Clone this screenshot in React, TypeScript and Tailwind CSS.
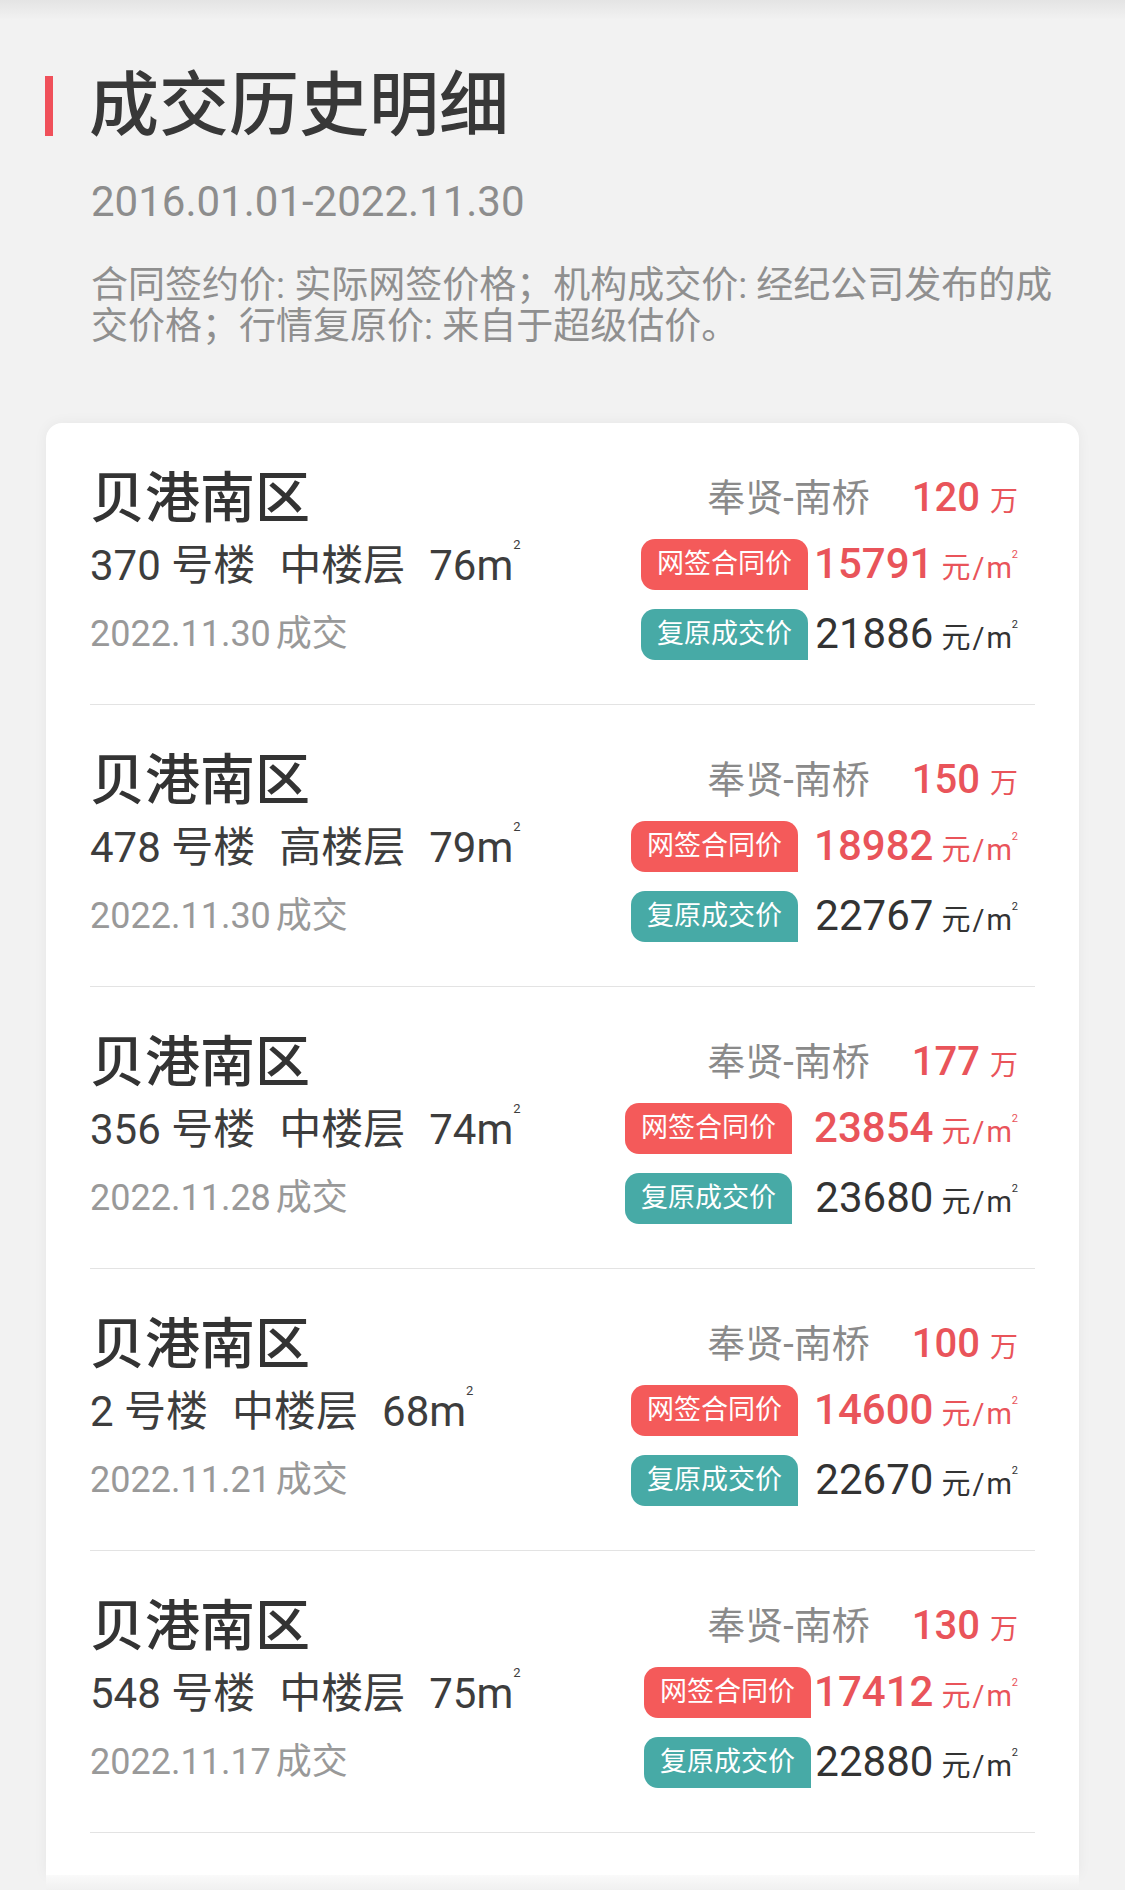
const rows = [
  { no: '370', floor: '中楼层', area: '76', date: '2022.11.30', total: '120', sign: '15791', real: '21886', gap: 'gap-x-[6px]' },
  { no: '478', floor: '高楼层', area: '79', date: '2022.11.30', total: '150', sign: '18982', real: '22767', gap: 'gap-x-[16px]' },
  { no: '356', floor: '中楼层', area: '74', date: '2022.11.28', total: '177', sign: '23854', real: '23680', gap: 'gap-x-[22px]' },
  { no: '2', floor: '中楼层', area: '68', date: '2022.11.21', total: '100', sign: '14600', real: '22670', gap: 'gap-x-[16px]' },
  { no: '548', floor: '中楼层', area: '75', date: '2022.11.17', total: '130', sign: '17412', real: '22880', gap: 'gap-x-[3px]' },
];

function Unit() {
  return (
    <span className="ml-[8px] text-[29px] leading-none font-normal">
      元<span className="mx-[2px]">/</span>m
      <span className="text-[11px] leading-none align-[20px]">2</span>
    </span>
  );
}

function Row({ r }: { r: (typeof rows)[number] }) {
  return (
    <div className="flex justify-between border-b border-[#e3e3e3] pt-[42px] pb-[33px]">
      {/* left */}
      <div className="grid grid-rows-[66px_66px_74px] items-center">
        <div className="text-[55px] leading-none font-medium text-[#333]">贝港南区</div>
        <div className="flex items-baseline text-[42px] leading-[1.15] text-[#3d3d3d]">
          <span>{r.no} 号楼</span>
          <span className="ml-[24px]">{r.floor}</span>
          <span className="ml-[24px]">
            {r.area}m<span className="text-[13px] leading-none align-[31px]">2</span>
          </span>
        </div>
        <div className="text-[36px] leading-none text-[#999]">
          {r.date}
          <span className="ml-[5px]">成交</span>
        </div>
      </div>

      {/* right */}
      <div className={`grid grid-cols-[auto_auto] grid-rows-[66px_66px_74px] items-center ${r.gap} pr-[17px]`}>
        <div className="col-span-2 justify-self-end flex items-baseline">
          <span className="text-[38px] leading-none text-[#8a8a8a]">奉贤-南桥</span>
          <span className="ml-[42px] text-[40px] leading-none font-medium text-[#e9545a]">{r.total}</span>
          <span className="ml-[10px] text-[28px] leading-none text-[#e9545a]">万</span>
        </div>

        <div className="h-[51px] flex items-center px-[16px] rounded-[14px] rounded-br-none bg-[#f45a5a] text-[27px] text-white">
          网签合同价
        </div>
        <div className="justify-self-end flex items-baseline text-[#e9545a]">
          <span className="text-[42px] leading-none font-medium">{r.sign}</span>
          <Unit />
        </div>

        <div className="h-[51px] flex items-center px-[16px] rounded-[14px] rounded-br-none bg-[#47aaa6] text-[27px] text-white">
          复原成交价
        </div>
        <div className="justify-self-end flex items-baseline text-[#333]">
          <span className="text-[42px] leading-none">{r.real}</span>
          <Unit />
        </div>
      </div>
    </div>
  );
}

export default function App() {
  return (
    <div className="w-[1125px] h-[1890px] overflow-hidden bg-[linear-gradient(to_bottom,#e4e4e4_0px,#f2f2f2_20px)] font-['Roboto','Noto_Sans_CJK_SC',sans-serif]">
      {/* header */}
      <div className="pt-[71px] pl-[45px]">
        <div className="flex items-center h-[70px]">
          <div className="w-[8px] h-[60px] bg-[#f0505a]" />
          <h1 className="ml-[36px] text-[70px] leading-none font-medium text-[#383838]">成交历史明细</h1>
        </div>
        <div className="mt-[36px] pl-[46px] text-[42px] leading-[50px] text-[#8d8d8d]">2016.01.01-2022.11.30</div>
        <p className="mt-[38px] pl-[46px] text-[37px] leading-[41px] text-[#8f8f8f] whitespace-nowrap">
          合同签约价: 实际网签价格；机构成交价: 经纪公司发布的成
          <br />
          交价格；行情复原价: 来自于超级估价。
        </p>
      </div>

      {/* list card */}
      <div className="mt-[76px] ml-[46px] w-[1033px] bg-white rounded-t-[16px] shadow-[0_0_14px_rgba(0,0,0,0.05)] px-[44px]">
        {rows.map((r, i) => (
          <Row key={i} r={r} />
        ))}
        <div className="h-[42px]" />
      </div>
      <div className="ml-[46px] w-[1033px] h-[20px] bg-gradient-to-b from-[#fafafa] to-[#ededed]" />
    </div>
  );
}
